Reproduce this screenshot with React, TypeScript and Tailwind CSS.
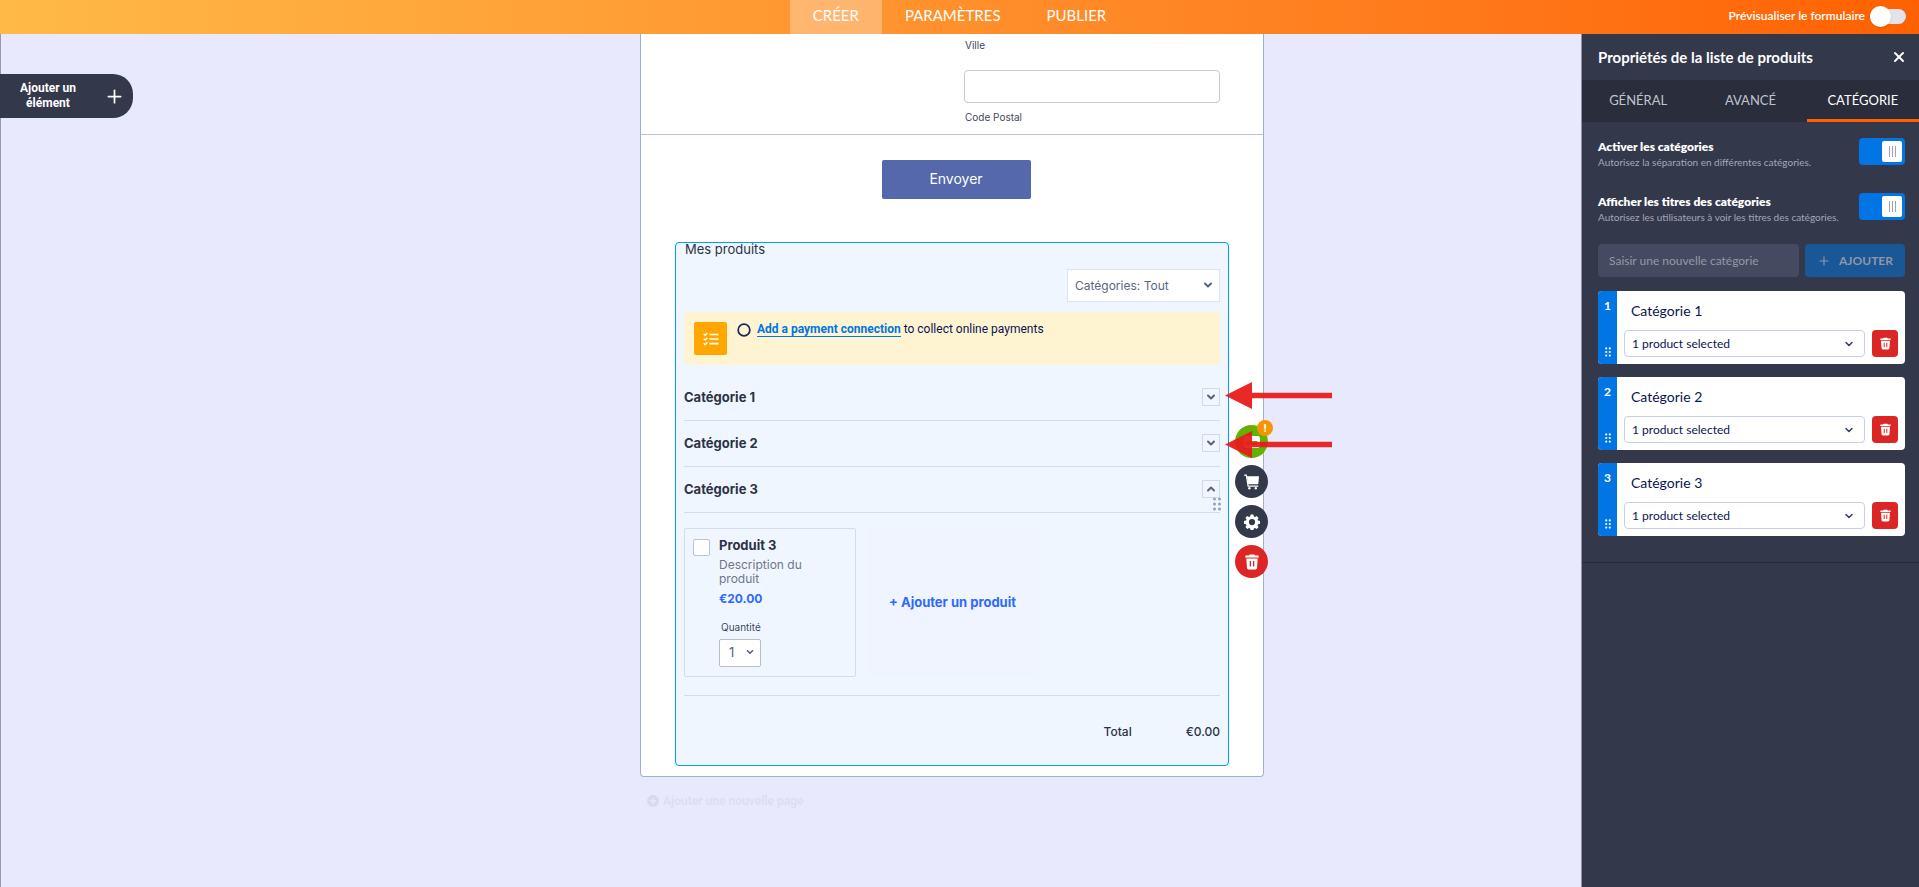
import { useState } from 'react';
import { ChevronDown, ChevronUp, Circle, Plus, X } from 'lucide-react';
import clsx from 'clsx';

const navItems = ['CRÉER', 'PARAMÈTRES', 'PUBLIER'];
const panelTabs = ['GÉNÉRAL', 'AVANCÉ', 'CATÉGORIE'];
const categories = ['Catégorie 1', 'Catégorie 2', 'Catégorie 3'];

function TrashIcon({ className }: { className?: string }) {
  return (
    <svg viewBox="0 0 14 16" className={className} fill="currentColor" aria-hidden="true">
      <path d="M4.6 0.6h4.8l.6.9h3c.4 0 .7.3.7.7v1.2H.3V2.2c0-.4.3-.7.7-.7h3z" />
      <path
        fillRule="evenodd"
        d="M1.3 4.4h11.4l-.7 9.6c-.1.9-.8 1.5-1.6 1.5H3.6c-.8 0-1.5-.6-1.6-1.5zM4.7 7v5.4h1.3V7zm3.3 0v5.4h1.3V7z"
      />
    </svg>
  );
}

function GearIcon() {
  return (
    <svg viewBox="0 0 16 16" className="h-4 w-4" fill="currentColor" aria-hidden="true">
      <path
        fillRule="evenodd"
        d="M6.6.6h2.8l.4 1.9 1.2.5 1.7-1 1.9 1.9-1 1.7.4 1 2 .4v2.8l-2 .4-.5 1.2 1.1 1.7-1.9 1.9-1.7-1.1-1.2.5-.4 2H6.6l-.4-2-1.2-.5-1.7 1.1-1.9-1.9 1.1-1.7L2 10.2l-2-.4V7l2-.4.5-1.1-1.1-1.7 1.9-1.9 1.7 1.1 1.2-.5zM8 5a3.1 3.1 0 1 0 0 6.2A3.1 3.1 0 0 0 8 5z"
      />
    </svg>
  );
}

function CartIcon() {
  return (
    <svg viewBox="0 0 16 16" className="h-4 w-4" aria-hidden="true">
      <path d="M.6 1.2h1.7l1.8 11h9.7" fill="none" stroke="currentColor" strokeWidth="1.2" strokeLinecap="round" />
      <path d="M2.9 2.3H15l-.6 7.2c0 .4-.4.8-.9.8H4.1z" fill="currentColor" />
      <circle cx="5.4" cy="14.2" r="1.2" fill="currentColor" />
      <circle cx="11.8" cy="14.2" r="1.2" fill="currentColor" />
    </svg>
  );
}

function ChecklistIcon() {
  return (
    <svg viewBox="0 0 16 16" className="h-4 w-4" fill="none" stroke="currentColor" aria-hidden="true">
      <path d="M6.5 3.5h9M6.5 8h9M6.5 12.7h9" strokeWidth="1.7" />
      <path d="M.7 3l1.4 1.3L4.4 2M.7 7.700L2.1 9l2.3-2.300M.7 12.300l1.4 1.400 2.300-2.400" strokeWidth="1.4" />
    </svg>
  );
}

function DragDots({ className }: { className?: string }) {
  return (
    <svg viewBox="0 0 8 14" className={className} fill="currentColor" aria-hidden="true">
      {[2, 7, 12].map((y) => (
        <g key={y}>
          <circle cx="1.5" cy={y} r="1.5" />
          <circle cx="6.5" cy={y} r="1.5" />
        </g>
      ))}
    </svg>
  );
}

function Arrow({ className }: { className?: string }) {
  return (
    <svg viewBox="0 0 107 27" className={clsx('absolute z-20 h-[27px] w-[107px]', className)} aria-hidden="true">
      <path d="M0 13.5L27 0v10.7h80v5.6H27V27z" fill="#e81c1c" fillOpacity="0.95" />
    </svg>
  );
}

function Header() {
  return (
    <header className="grid h-[34px] grid-cols-[1fr_auto_1fr] bg-linear-to-r from-[#ffb946] to-[#ff6100] text-white">
      <nav className="col-start-2 flex">
        {navItems.map((item, i) => (
          <a
            key={item}
            href="#"
            className={clsx('flex items-center px-[23px] pb-[3px] text-[15px]', i === 0 && 'bg-white/30')}
          >
            {item}
          </a>
        ))}
      </nav>
      <label className="flex items-center justify-end gap-[5px] pr-[13px] text-xs font-semibold">
        <span className="pb-0.5">Prévisualiser le formulaire</span>
        <input type="checkbox" className="sr-only" />
        <span className="mb-0.5 flex h-[15px] w-9 items-center rounded-full bg-[#e3e3ea]">
          <span className="h-[21px] w-[21px] shrink-0 rounded-full bg-white shadow" />
        </span>
      </label>
    </header>
  );
}

function ProductCard() {
  return (
    <div className="flex h-[149px] w-[172px] gap-[9px] rounded-xs border border-[#d5dcea] pt-2.5 pl-2">
      <input
        type="checkbox"
        aria-label="Produit 3"
        className="h-[17px] w-[17px] shrink-0 appearance-none rounded-xs border border-[#bcc3d6] bg-white"
      />
      <div className="w-[96px]">
        <h4 className="text-[13px] leading-3 font-bold text-[#2c3345]">Produit 3</h4>
        <p className="mt-[7px] text-xs leading-[14px] text-[#6f7689]">Description du produit</p>
        <p className="mt-[5px] text-xs leading-4 font-bold text-[#2e69ff]">€20.00</p>
        <label htmlFor="quantity" className="mt-3 block pl-0.5 text-[10px] leading-4 text-[#3f485e]">
          Quantité
        </label>
        <div className="relative mt-1 w-[42px]">
          <select
            id="quantity"
            className="block h-7 w-full appearance-none rounded-xs border border-[#b8bdc9] bg-white pl-[9px] text-[13px] text-[#57647e]"
          >
            <option>1</option>
          </select>
          <ChevronDown className="pointer-events-none absolute top-2 right-1.5 h-2.5 w-2.5 text-[#57647e]" strokeWidth={4} />
        </div>
      </div>
    </div>
  );
}

function FieldActions() {
  const round = 'flex h-[33px] w-[33px] items-center justify-center rounded-full text-white';
  return (
    <div className="absolute top-[182px] -right-10 z-10 flex flex-col gap-[7px]">
      <button type="button" aria-label="Paiement" className={clsx(round, 'relative bg-[#64b200]')}>
        <svg viewBox="0 0 16 12" className="h-3 w-4" aria-hidden="true">
          <path fill="currentColor" fillRule="evenodd" d="M1.5 0h13L16 1.5v9L14.5 12h-13L0 10.5v-9zM2 5v4h11V5z" />
        </svg>
        <span className="absolute -top-[5px] -right-[5px] flex h-4 w-4 items-center justify-center rounded-full bg-[#f79400] text-[11px] font-bold">
          !
        </span>
      </button>
      <button type="button" aria-label="Produits" className={clsx(round, 'bg-[#33384a]')}>
        <CartIcon />
      </button>
      <button type="button" aria-label="Propriétés" className={clsx(round, 'bg-[#33384a]')}>
        <GearIcon />
      </button>
      <button type="button" aria-label="Supprimer" className={clsx(round, 'bg-[#dc2626]')}>
        <TrashIcon className="h-4 w-3.5" />
      </button>
    </div>
  );
}

function ProductList() {
  return (
    <section className="relative mx-[34px] mt-[43px] rounded-sm border border-[#0099ff] bg-[#eff6ff] px-2">
      <h2 className="pl-px text-[13px] leading-3 text-[#2c3345]">Mes produits</h2>

      <div className="relative mt-3.5 ml-auto w-[153px]">
        <select
          aria-label="Catégories"
          className="block h-[33px] w-full appearance-none border border-[#dfe3ee] bg-white pl-[7px] text-xs text-[#5c6680]"
        >
          <option>Catégories: Tout</option>
        </select>
        <ChevronDown className="pointer-events-none absolute top-2.5 right-1.5 h-3 w-3 text-[#57647e]" strokeWidth={4} />
      </div>

      <div className="mt-2.5 flex h-[53px] items-start rounded-sm bg-[#fff4d1] p-2.5 text-[#0a1551]">
        <span className="flex h-[33px] w-[33px] items-center justify-center rounded-xs bg-[#ffa600] text-white">
          <ChecklistIcon />
        </span>
        <Circle className="mt-px ml-2.5 h-3.5 w-3.5 text-[#1f2a5c]" strokeWidth={3} />
        <p className="-mt-px ml-1.5 font-[Roboto,sans-serif] text-xs leading-4">
          <a href="#" className="border-b border-[#0075e3] font-bold text-[#0075e3]">
            Add a payment connection
          </a>{' '}
          to collect online payments
        </p>
      </div>

      <div className="mt-2.5">
        {categories.map((name, i) => {
          const open = i === 2;
          const Chevron = open ? ChevronUp : ChevronDown;
          return (
            <div key={name} className="relative flex h-[46px] items-center justify-between border-b border-[#d7dbe8]">
              <h3 className="text-[13px] font-bold text-[#2c3345]">{name}</h3>
              <button
                type="button"
                aria-label={name}
                aria-expanded={open}
                className="mb-px flex h-[18px] w-[18px] items-center justify-center border border-[#d3d9e8] text-[#57647e]"
              >
                <Chevron className="h-3 w-3" strokeWidth={4} />
              </button>
              {open && <DragDots className="absolute -right-px bottom-px h-3.5 w-2 text-[#9aa0b5]" />}
            </div>
          );
        })}
      </div>

      <div className="mt-[15px] flex gap-2.5">
        <ProductCard />
        <button type="button" className="w-[173px] rounded-xs bg-[#f0f4ff] text-[13px] font-bold text-[#2e69ff]">
          + Ajouter un produit
        </button>
      </div>

      <div className="mt-[18px] flex justify-end gap-[54px] border-t border-[#d7dbe8] pt-[26px] pb-[23px] text-xs leading-5 font-medium text-[#2c3345]">
        <span>Total</span>
        <span>€0.00</span>
      </div>

      <FieldActions />
      <Arrow className="top-[139px] -right-[104px]" />
      <Arrow className="top-[188px] -right-[104px]" />
    </section>
  );
}

function Canvas() {
  return (
    <main className="relative flex-1 border-l border-[#9798ae] bg-[#e9e9fe] pl-[322px] font-[Inter,sans-serif]">
      <button
        type="button"
        className="absolute top-10 -left-px flex h-11 w-[133px] items-center rounded-r-[20px] bg-[#33384a] pr-2 pl-4 text-white"
      >
        <span className="w-16 text-center font-[Roboto,sans-serif] text-xs leading-[15px] font-bold">Ajouter un élément</span>
        <Plus className="ml-auto h-[21px] w-[21px]" strokeWidth={2} />
      </button>

      <div className="mx-auto w-full max-w-[624px]">
        <form className="rounded-b-sm border border-t-0 border-[#9db3cb] bg-white pb-2.5">
          <div className="border-b border-[#b9c3d8] pt-[3px] pr-[43px] pb-[9px] text-[10px] leading-4 text-[#3f485e]">
            <div className="ml-auto w-[256px]">
              <p className="pl-px">Ville</p>
              <input
                id="postal"
                type="text"
                className="mt-[17px] block h-[33px] w-full rounded-sm border border-[#c3cad8] bg-white px-2 text-sm"
              />
              <label htmlFor="postal" className="mt-1.5 block pl-px">
                Code Postal
              </label>
            </div>
          </div>
          <div className="flex justify-center pt-[25px] pl-2">
            <button type="button" className="h-[39px] w-[149px] rounded-xs bg-[#5468ab] pb-0.5 text-sm text-white">
              Envoyer
            </button>
          </div>
          <ProductList />
        </form>
        <button
          type="button"
          className="mt-4 ml-[7px] flex items-center gap-1 font-[Roboto,sans-serif] text-xs font-bold text-[#dbdff3]"
        >
          <span className="flex h-3 w-3 items-center justify-center rounded-full bg-[#d6dbee] text-[#e9e9fe]">
            <Plus className="h-2 w-2" strokeWidth={4} />
          </span>
          Ajouter une nouvelle page
        </button>
      </div>
    </main>
  );
}

function Setting({ title, hint }: { title: string; hint: string }) {
  const [on, setOn] = useState(true);
  return (
    <label className="flex items-start justify-between">
      <span>
        <span className="block text-xs leading-[18px] font-extrabold text-white">{title}</span>
        <span className="block text-[10px] leading-[13px] text-[#a3a7b8]">{hint}</span>
      </span>
      <input type="checkbox" checked={on} onChange={() => setOn(!on)} className="peer sr-only" />
      <span className="flex h-[27px] w-[46px] items-center rounded-sm bg-[#8d91a5] p-[3px] peer-checked:justify-end peer-checked:bg-[#0075e3]">
        <span className="flex h-[21px] w-5 items-center justify-center gap-0.5 rounded-xs bg-white">
          <span className="h-[11px] w-px bg-[#9ea2b8]" />
          <span className="h-[11px] w-px bg-[#9ea2b8]" />
          <span className="h-[11px] w-px bg-[#9ea2b8]" />
        </span>
      </span>
    </label>
  );
}

function CategoryCard({ index, name }: { index: number; name: string }) {
  return (
    <li className="flex h-[73px] overflow-hidden rounded-sm bg-white text-[#0a1551]">
      <div className="flex w-[19px] flex-col items-center justify-between bg-[#0075e3] pt-[7px] pb-[7px] text-white">
        <span className="text-xs leading-4 font-bold">{index}</span>
        <DragDots className="h-2.5 w-1.5" />
      </div>
      <div className="flex-1 pt-2.5 pr-[7px] pl-[7px]">
        <input
          type="text"
          aria-label={`Nom de la catégorie ${index}`}
          defaultValue={name}
          className="block h-5 w-full bg-transparent px-[7px] text-sm"
        />
        <div className="mt-[9px] flex gap-[7px]">
          <div className="relative flex-1">
            <select
              aria-label={`Produits de ${name}`}
              className="block h-[27px] w-full appearance-none rounded-sm border border-[#c8ceed] bg-white pl-[7px] text-xs"
            >
              <option>1 product selected</option>
            </select>
            <ChevronDown className="pointer-events-none absolute top-2 right-2.5 h-3 w-3 text-[#343c6a]" strokeWidth={3} />
          </div>
          <button
            type="button"
            aria-label={`Supprimer ${name}`}
            className="flex h-[27px] w-[26px] items-center justify-center rounded-sm bg-[#dc2626] text-white"
          >
            <TrashIcon className="h-[13px] w-[11px]" />
          </button>
        </div>
      </div>
    </li>
  );
}

function PropertiesPanel() {
  return (
    <aside className="w-[338px] shrink-0 border-l border-[#8f90a6] bg-[#34384b]">
      <div className="flex h-[46px] items-center justify-between pr-3 pl-4 text-white">
        <h2 className="text-[15px] font-bold">Propriétés de la liste de produits</h2>
        <button type="button" aria-label="Fermer">
          <X className="h-4 w-4" strokeWidth={3} />
        </button>
      </div>

      <div role="tablist" className="flex h-[42px] bg-[#2a2d3b]">
        {panelTabs.map((tab) => {
          const active = tab === 'CATÉGORIE';
          return (
            <button
              key={tab}
              type="button"
              role="tab"
              aria-selected={active}
              className={clsx(
                'flex-1 border-b-3 pt-0.5 text-[13px]',
                active ? 'border-[#ff6100] text-white' : 'border-transparent text-[#c0c3ce]',
              )}
            >
              {tab}
            </button>
          );
        })}
      </div>

      <div className="border-b border-[#272a38] pt-4 pr-[14px] pb-[26px] pl-4">
        <div className="flex flex-col gap-6">
          <Setting title="Activer les catégories" hint="Autorisez la séparation en différentes catégories." />
          <Setting
            title="Afficher les titres des catégories"
            hint="Autorisez les utilisateurs à voir les titres des catégories."
          />
        </div>

        <div className="mt-5 flex gap-1.5">
          <input
            type="text"
            aria-label="Nouvelle catégorie"
            placeholder="Saisir une nouvelle catégorie"
            className="h-[33px] min-w-0 flex-1 rounded-sm bg-[#454a60] px-[11px] text-xs text-white placeholder:text-[#9498a8]"
          />
          <button
            type="button"
            className="flex h-[33px] w-[100px] items-center justify-center gap-2 rounded-sm bg-[#1a5796] text-xs font-bold text-[#9096a5]"
          >
            <Plus className="h-3.5 w-3.5" strokeWidth={2} />
            AJOUTER
          </button>
        </div>

        <ul className="mt-3.5 flex flex-col gap-[13px]">
          {categories.map((name, i) => (
            <CategoryCard key={name} index={i + 1} name={name} />
          ))}
        </ul>
      </div>
    </aside>
  );
}

export default function App() {
  return (
    <div className="flex min-h-screen flex-col font-[Lato,sans-serif]">
      <Header />
      <div className="flex flex-1">
        <Canvas />
        <PropertiesPanel />
      </div>
    </div>
  );
}
